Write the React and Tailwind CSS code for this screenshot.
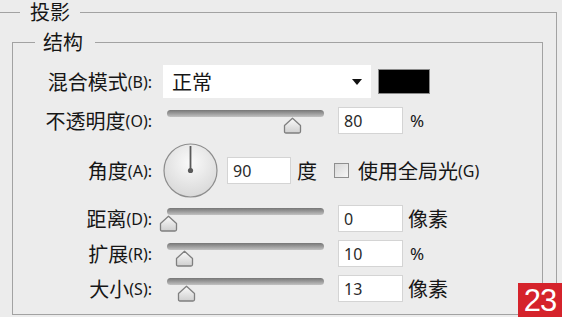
import React from "react";

const cjk = { fontFamily: '"Noto Sans CJK SC", "Noto Sans", sans-serif' };
const latin = { fontFamily: '"Noto Sans", "Liberation Sans", sans-serif' };

// label like 混合模式(B):
const Label = ({ text, hotkey }) => (
	<div className="w-[139px] shrink-0 flex justify-end items-center text-[#161616]" style={cjk}>
		<span className="text-[20px] leading-none">{text}</span>
		<span className="text-[16px] leading-none" style={latin}>
			({hotkey}):
		</span>
	</div>
);

const NumberBox = ({ value, width = "w-[65px]" }) => (
	<div
		className={`${width} h-[27px] bg-white border border-[#d4d4d4] flex items-center pl-[5px] text-[16px] text-[#2a2a2a] leading-none`}
		style={latin}
	>
		{value}
	</div>
);

const Thumb = () => (
	<svg width="19" height="17" viewBox="0 0 19 17">
		<defs>
			<linearGradient id="thumbFill" x1="0" y1="0" x2="0" y2="1">
				<stop offset="0" stopColor="#fbfbfb" />
				<stop offset="1" stopColor="#cfcfcf" />
			</linearGradient>
		</defs>
		<path
			d="M1.5 8.5 L9.5 1.2 L17.5 8.5 V14.5 Q17.5 16 16 16 H3 Q1.5 16 1.5 14.5 Z"
			fill="url(#thumbFill)"
			stroke="#7f7f7f"
			strokeWidth="1.3"
			strokeLinejoin="round"
		/>
	</svg>
);

const Slider = ({ thumbLeft }) => (
	<div className="relative w-[157px] h-[27px]">
		<div className="mt-[6px] h-[7px] rounded-full bg-linear-to-b from-[#767676] to-[#c2c2c2]" />
		<div className="absolute top-[7px]" style={{ left: thumbLeft }}>
			<Thumb />
		</div>
	</div>
);

const Unit = ({ children, className = "" }) => (
	<span className={`text-[20px] leading-none text-[#161616] ${className}`} style={cjk}>
		{children}
	</span>
);

const SliderRow = ({ text, hotkey, thumbLeft, value, unit, className }) => (
	<div className={`flex items-center h-[27px] ${className}`}>
		<Label text={text} hotkey={hotkey} />
		<div className="ml-[15px]">
			<Slider thumbLeft={thumbLeft} />
		</div>
		<div className="ml-[14px]">
			<NumberBox value={value} />
		</div>
		{unit === "%" ? (
			<span className="ml-[7px] text-[17px] text-[#161616] leading-none" style={latin}>
				%
			</span>
		) : (
			<Unit className="ml-[5px]">{unit}</Unit>
		)}
	</div>
);

const Dial = () => (
	<svg width="55" height="55" viewBox="0 0 55 55">
		<defs>
			<radialGradient id="dialFill" cx="0.5" cy="0.35" r="0.7">
				<stop offset="0" stopColor="#fafafa" />
				<stop offset="1" stopColor="#d6d6d6" />
			</radialGradient>
		</defs>
		<circle cx="27.5" cy="27.5" r="26.5" fill="url(#dialFill)" stroke="#8d8d8d" strokeWidth="1.2" />
		<line x1="27.5" y1="27.5" x2="27.5" y2="3" stroke="#5a5a5a" strokeWidth="1.8" />
		<circle cx="27.5" cy="27.5" r="2.6" fill="#5a5a5a" />
	</svg>
);

export default function App() {
	return (
		<div className="w-[562px] h-[317px] overflow-hidden bg-[#ececec] relative">
			<fieldset className="ml-[-10px] w-[567px] min-w-0 border border-[#a2a2a2] pb-[20px]">
				<legend className="ml-[29px] px-[10px] text-[20px] leading-[24px] text-[#161616]" style={cjk}>
					投影
				</legend>

				<fieldset className="ml-[21px] mr-[13px] mt-[6px] min-w-0 border border-[#a2a2a2] pb-[12px]">
					<legend className="ml-[22px] pl-[8px] pr-[12px] text-[20px] leading-[24px] text-[#161616]" style={cjk}>
						结构
					</legend>

					{/* blend mode */}
					<div className="flex items-center h-[33px] mt-[11px]">
						<Label text="混合模式" hotkey="B" />
						<div className="ml-[11px] w-[208px] h-[33px] bg-white flex items-center justify-between pl-[9px] pr-[9px]">
							<Unit>正常</Unit>
							<svg width="10" height="6" viewBox="0 0 10 6">
								<path d="M0 0 H10 L5 6 Z" fill="#111" />
							</svg>
						</div>
						<div className="ml-[7px] w-[52px] h-[25px] bg-black border border-[#8a8a8a]" />
					</div>

					<SliderRow className="mt-[9px]" text="不透明度" hotkey="O" thumbLeft={116} value="80" unit="%" />

					{/* angle */}
					<div className="flex items-center h-[55px] mt-[9px]">
						<Label text="角度" hotkey="A" />
						<div className="ml-[11px] flex">
							<Dial />
						</div>
						<div className="ml-[9px]">
							<NumberBox value="90" width="w-[64px]" />
						</div>
						<Unit className="ml-[6px]">度</Unit>
						<div className="ml-[17px] w-[15px] h-[15px] border border-[#8f8f8f] bg-linear-to-br from-[#d8d8d8] to-[#f6f6f6]" />
						<span className="ml-[9px] flex items-center text-[#161616]" style={cjk}>
							<span className="text-[20px] leading-none">使用全局光</span>
							<span className="text-[16px] leading-none" style={latin}>
								(G)
							</span>
						</span>
					</div>

					<SliderRow className="mt-[7px]" text="距离" hotkey="D" thumbLeft={-8} value="0" unit="像素" />
					<SliderRow className="mt-[8px]" text="扩展" hotkey="R" thumbLeft={8} value="10" unit="%" />
					<SliderRow className="mt-[8px]" text="大小" hotkey="S" thumbLeft={10} value="13" unit="像素" />
				</fieldset>
			</fieldset>

			<div
				className="absolute right-0 bottom-0 w-[44px] h-[34px] bg-[#d5232b] flex items-center justify-center text-white text-[31px] leading-none tracking-[-1px]"
				style={{ fontFamily: '"Liberation Sans", sans-serif' }}
			>
				23
			</div>
		</div>
	);
}
